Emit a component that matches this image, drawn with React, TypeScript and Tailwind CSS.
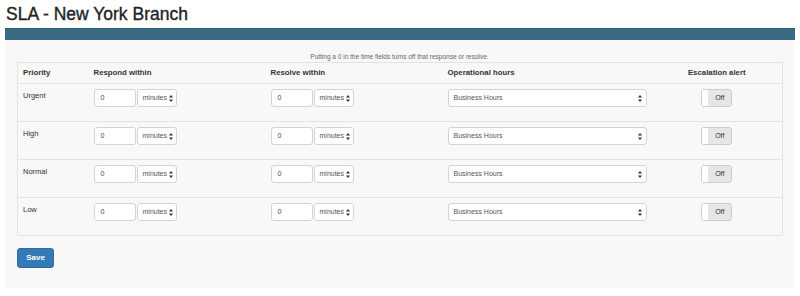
import React from "react";

const priorities = ["Urgent", "High", "Normal", "Low"];

function UpDown() {
  return (
    <svg width="4" height="7" viewBox="0 0 4 7" className="shrink-0">
      <path d="M2 0 L4 2.6 L0 2.6 Z" fill="#333" />
      <path d="M2 7 L4 4.4 L0 4.4 Z" fill="#333" />
    </svg>
  );
}

function TimeField() {
  return (
    <div className="flex gap-px">
      <div className="w-[42px] h-[18px] bg-white border border-[#d4d4d4] rounded-[3px] flex items-center pl-[6px] text-[7px] text-[#444]">
        0
      </div>
      <div className="w-[40px] h-[18px] bg-white border border-[#d4d4d4] rounded-[3px] flex items-center justify-between pl-[5px] pr-[3px] text-[7px] text-[#555]">
        <span>minutes</span>
        <UpDown />
      </div>
    </div>
  );
}

function Toggle() {
  return (
    <div className="mx-auto w-[31px] h-[18px] border border-[#ccc] rounded-[3px] flex overflow-hidden">
      <div className="w-[6px] bg-white" />
      <div className="flex-1 bg-[#e6e6e6] flex items-center justify-center text-[7px] text-[#333]">Off</div>
    </div>
  );
}

export default function App() {
  return (
    <div className="w-[800px] h-[296px] bg-white px-[5px] text-[#333]" style={{ fontFamily: '"Liberation Sans", Arial, sans-serif' }}>
      <h1 className="h-[28px] pl-px pt-[4px] text-[17.5px] leading-[20px] font-normal text-[#222] [-webkit-text-stroke:0.35px_#222]">
        SLA - New York Branch
      </h1>
      <div className="h-[12px] bg-[#386a82] border-t border-[#2f5b70]" />
      <div className="w-[789px] bg-[#f8f8f8] px-[12px] pt-[12px] pb-[20px]">
        <p className="text-center text-[6.5px] leading-[9px] text-[#666] mb-px">
          Putting a 0 in the time fields turns off that response or resolve.
        </p>
        <table className="w-[765px] table-fixed border-collapse border border-[#e2e2e2] text-[7.5px]">
          <colgroup>
            <col className="w-[71px]" />
            <col className="w-[177px]" />
            <col className="w-[177px]" />
            <col className="w-[209px]" />
            <col className="w-[131px]" />
          </colgroup>
          <thead>
            <tr className="h-[21px] text-[7.8px] font-bold">
              <th className="text-left px-[5px]">Priority</th>
              <th className="text-left px-[5px]">Respond within</th>
              <th className="text-left px-[5px]">Resolve within</th>
              <th className="text-left px-[5px]">Operational hours</th>
              <th className="text-center px-[5px]">Escalation alert</th>
            </tr>
          </thead>
          <tbody>
            {priorities.map((p) => (
              <tr key={p} className="border-t border-[#e2e2e2] h-[38px] align-top">
                <td className="px-[5px] pt-[6px]">{p}</td>
                <td className="px-[5px] pt-[5px] pb-[14px]"><TimeField /></td>
                <td className="px-[5px] pt-[5px] pb-[14px]"><TimeField /></td>
                <td className="px-[5px] pt-[5px] pb-[14px]">
                  <div className="w-[199px] h-[18px] bg-white border border-[#d4d4d4] rounded-[3px] flex items-center justify-between pl-[5px] pr-[4px] text-[7px] text-[#555]">
                    <span>Business Hours</span>
                    <UpDown />
                  </div>
                </td>
                <td className="px-[5px] pt-[5px] pb-[14px]"><Toggle /></td>
              </tr>
            ))}
          </tbody>
        </table>
        <button className="mt-[12px] w-[37px] h-[20px] bg-[#337ab7] border border-[#2e6da4] rounded-[3px] text-white text-[8px] font-bold flex items-center justify-center">
          Save
        </button>
      </div>
    </div>
  );
}
